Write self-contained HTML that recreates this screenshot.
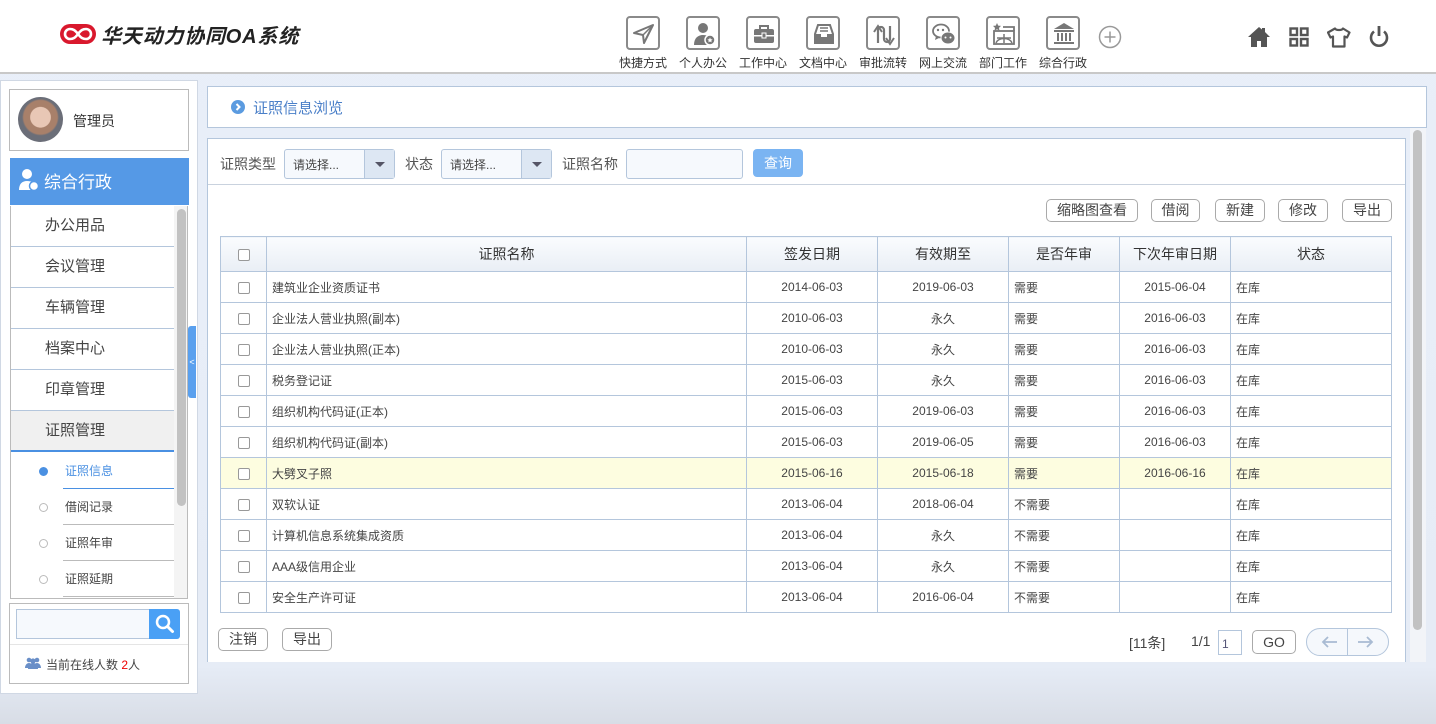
<!DOCTYPE html>
<html><head><meta charset="utf-8">
<style>
*{box-sizing:border-box;margin:0;padding:0}
body{width:1436px;height:724px;overflow:hidden;background:linear-gradient(#e9eff9,#e6ecf6 92%,#d8dde6);font-family:"Liberation Sans","Noto Sans CJK SC",sans-serif;color:#333;position:relative}
.a{position:absolute}
#hd{left:0;top:0;width:1436px;height:74px;background:#fff;border-bottom:2px solid #c8c8c8}
.ico{position:absolute;top:16px;width:34px;height:34px;border:2px solid #8a8a8a;border-radius:4px}
.ico svg{position:absolute;left:3px;top:3px}
.lbl{position:absolute;top:54px;font-size:12px;color:#333;width:60px;text-align:center}
.menu{left:10px;width:163px;height:41px;border-bottom:1px solid #b4c6dc;font-size:15px;color:#444;padding-left:34px;line-height:40px;background:#fff}
.sub{left:62px;width:111px;height:36px;border-bottom:1px solid #bbb;font-size:12px;color:#444;line-height:36px;padding-left:2px}
.dot{position:absolute;left:-24px;top:14px;width:9px;height:9px;border-radius:50%;border:1px solid #bbb;background:#fff}
.btn{position:absolute;height:23px;border:1px solid #aaa;border-radius:5px;background:#fff;font-size:14px;color:#444;text-align:center;line-height:21px}
table{border-collapse:collapse;font-size:12px;color:#444}
td,th{border:1px solid #b4c6dc;height:31px}
th{height:35px;font-weight:normal;font-size:14px;color:#333;background:linear-gradient(#fafcfe,#e9eef5)}
td.c{text-align:center}
td.l{padding-left:5px}
.cb{display:inline-block;width:12px;height:12px;border:1px solid #999;border-radius:2px;background:#fff;vertical-align:middle}
.sel{position:absolute;top:149px;height:30px;border:1px solid #b4c6dc;border-radius:3px;background:#f6f9fd;font-size:12px;color:#444;line-height:30px;padding-left:8px}
.sel i{position:absolute;right:0;top:0;width:30px;height:28px;background:#dde7f3;border-left:1px solid #b4c6dc}
.sel i:after{content:"";position:absolute;left:10px;top:12px;border:5px solid transparent;border-top:5px solid #556}
</style></head><body>
<div id="hd" class="a">
 <svg class="a" style="left:60px;top:24px" width="36" height="20" viewBox="0 0 36 20"><rect x="0" y="0" width="36" height="20" rx="10" fill="#d9182d"/><path d="M18 10c-3-4-5-5-8-5a5 5 0 0 0 0 10c3 0 5-1 8-5c3-4 5-5 8-5a5 5 0 0 1 0 10c-3 0-5-1-8-5z" fill="none" stroke="#fff" stroke-width="2.6"/></svg>
 <div class="a" style="left:101px;top:20px;font-size:20px;font-weight:bold;font-style:italic;color:#222;letter-spacing:0.8px">华天动力协同OA系统</div>

 <div class="ico" style="left:626px"><svg width="26" height="26" viewBox="0 0 26 26"><path d="M3 12L22 4L13 22L12 14Z" fill="none" stroke="#777" stroke-width="2" stroke-linejoin="round"/><path d="M12 14L22 4" stroke="#777" stroke-width="1.5"/></svg></div>
 <div class="ico" style="left:686px"><svg width="26" height="26" viewBox="0 0 26 26"><circle cx="12" cy="7" r="5" fill="#777"/><path d="M3 24c0-7 4-10 9-10s7 2 8 5v5z" fill="#777"/><circle cx="19" cy="19" r="5" fill="#777" stroke="#fff" stroke-width="1.5"/><path d="M19 16.5l.8 1.7 1.8.2-1.3 1.2.3 1.8-1.6-.9-1.6.9.3-1.8-1.3-1.2 1.8-.2z" fill="#fff"/></svg></div>
 <div class="ico" style="left:746px"><svg width="26" height="26" viewBox="0 0 26 26"><path d="M9 8V5h8v3" fill="none" stroke="#777" stroke-width="2"/><rect x="3" y="8" width="20" height="14" rx="2" fill="#777"/><rect x="3" y="14" width="20" height="1.5" fill="#fff"/><rect x="11" y="12" width="4" height="5" fill="#777" stroke="#fff"/></svg></div>
 <div class="ico" style="left:806px"><svg width="26" height="26" viewBox="0 0 26 26"><path d="M4 13L7 4h12l3 9v9H4z" fill="none" stroke="#777" stroke-width="2"/><path d="M4 13h6v3h6v-3h6v9H4z" fill="#777"/><path d="M9 7h8M9 10h8" stroke="#777" stroke-width="1.5"/></svg></div>
 <div class="ico" style="left:866px"><svg width="26" height="26" viewBox="0 0 26 26"><path d="M7 22V9a3 3 0 0 1 6 0v9a3 3 0 0 0 6 0V5" fill="none" stroke="#777" stroke-width="2.2"/><path d="M3 11l4-6 4 6M15 17l4 6 4-6" fill="none" stroke="#777" stroke-width="2"/></svg></div>
 <div class="ico" style="left:926px"><svg width="26" height="26" viewBox="0 0 26 26"><ellipse cx="10" cy="10" rx="8" ry="6.5" fill="none" stroke="#777" stroke-width="1.8"/><path d="M5 15l-1 4 4-2" fill="#777"/><ellipse cx="17" cy="17" rx="7" ry="6" fill="#777" stroke="#fff" stroke-width="1"/><circle cx="7" cy="9" r="1.2" fill="#777"/><circle cx="12" cy="9" r="1.2" fill="#777"/><circle cx="14.5" cy="16.5" r="1" fill="#fff"/><circle cx="19.5" cy="16.5" r="1" fill="#fff"/></svg></div>
 <div class="ico" style="left:986px"><svg width="26" height="26" viewBox="0 0 26 26"><path d="M6 2l1.2 2.6 2.8.3-2 2 .5 2.8-2.5-1.4-2.5 1.4.5-2.8-2-2 2.8-.3z" fill="#777"/><rect x="3" y="10" width="20" height="13" fill="none" stroke="#777" stroke-width="1.8"/><path d="M12 6h11v4" fill="none" stroke="#777" stroke-width="1.8"/><path d="M5 22c2-6 14-6 16 0M13 13v9M6 17h14" fill="none" stroke="#777" stroke-width="1.5"/></svg></div>
 <div class="ico" style="left:1046px"><svg width="26" height="26" viewBox="0 0 26 26"><path d="M3 8L13 2l10 6z" fill="#777"/><rect x="3" y="9" width="20" height="2" fill="#777"/><path d="M7 12v8M11 12v8M15 12v8M19 12v8" stroke="#777" stroke-width="2"/><rect x="3" y="21" width="20" height="2" fill="#777"/></svg></div>
 <svg class="a" style="left:1098px;top:25px" width="24" height="24" viewBox="0 0 24 24"><circle cx="12" cy="12" r="10.5" fill="none" stroke="#999" stroke-width="1.5"/><path d="M12 6.5v11M6.5 12h11" stroke="#999" stroke-width="1.5"/></svg>
 <div class="lbl" style="left:613px">快捷方式</div><div class="lbl" style="left:673px">个人办公</div><div class="lbl" style="left:733px">工作中心</div><div class="lbl" style="left:793px">文档中心</div><div class="lbl" style="left:853px">审批流转</div><div class="lbl" style="left:913px">网上交流</div><div class="lbl" style="left:973px">部门工作</div><div class="lbl" style="left:1033px">综合行政</div>

 <svg class="a" style="left:1247px;top:26px" width="24" height="22" viewBox="0 0 24 22"><path d="M12 1L1 11h3v10h6v-6h4v6h6V11h3L18 6V2h-3v1.5z" fill="#555"/></svg>
 <svg class="a" style="left:1289px;top:27px" width="20" height="20" viewBox="0 0 20 20"><g fill="none" stroke="#555" stroke-width="2.4"><rect x="1.5" y="1.5" width="6.5" height="6.5"/><rect x="12" y="1.5" width="6.5" height="6.5"/><rect x="1.5" y="12" width="6.5" height="6.5"/><rect x="12" y="12" width="6.5" height="6.5"/></g></svg>
 <svg class="a" style="left:1327px;top:27px" width="24" height="21" viewBox="0 0 24 21"><path d="M8 1.5c1 2 7 2 8 0l6.5 4-2.5 5-2.5-1V19.5H6V9.5l-2.5 1L1 5.5z" fill="none" stroke="#555" stroke-width="2.2" stroke-linejoin="round"/></svg>
 <svg class="a" style="left:1368px;top:25px" width="22" height="23" viewBox="0 0 22 23"><path d="M6 6.5a8 8 0 1 0 10 0" fill="none" stroke="#555" stroke-width="2.6"/><path d="M11 1v10" stroke="#555" stroke-width="2.8"/></svg>
</div>

<div class="a" style="left:0;top:80px;width:198px;height:614px;background:#fff;border:1px solid #d0d8e4"></div>
<div class="a" style="left:9px;top:89px;width:180px;height:62px;border:1px solid #bbb;background:#fff"></div>
<div class="a" style="left:18px;top:97px;width:45px;height:45px;border-radius:50%;background:radial-gradient(circle at 50% 45%,#e8c7b5 0 30%,#a8806a 32% 50%,#6b6e78 55%)"></div>
<div class="a" style="left:73px;top:111px;font-size:14px;color:#333">管理员</div>
<div class="a" style="left:10px;top:158px;width:179px;height:47px;background:#5599e6"></div>
<svg class="a" style="left:18px;top:168px" width="22" height="24" viewBox="0 0 22 24"><circle cx="9" cy="6" r="5" fill="#fff"/><path d="M1 22c0-6 3-9 8-9s7 2 8 5v4z" fill="#fff"/><circle cx="16" cy="18" r="4.5" fill="#fff" stroke="#5599e6" stroke-width="1.5"/></svg>
<div class="a" style="left:44px;top:168px;font-size:17px;color:#fff">综合行政</div>
<div class="a" style="left:10px;top:206px;width:178px;height:393px;border-left:1px solid #bbb;border-right:1px solid #bbb;border-bottom:1px solid #bbb;overflow:hidden">
 <div class="a menu" style="left:0;top:0">办公用品</div>
 <div class="a menu" style="left:0;top:41px">会议管理</div>
 <div class="a menu" style="left:0;top:82px">车辆管理</div>
 <div class="a menu" style="left:0;top:123px">档案中心</div>
 <div class="a menu" style="left:0;top:164px">印章管理</div>
 <div class="a menu" style="left:0;top:205px;background:#f0f0f0;border-bottom:2px solid #4a90e2">证照管理</div>
 <div class="a sub" style="left:52px;top:247px;color:#4a90e2;border-bottom:1px solid #4a90e2"><span class="dot" style="background:#4a90e2;border-color:#4a90e2"></span>证照信息</div>
 <div class="a sub" style="left:52px;top:283px"><span class="dot"></span>借阅记录</div>
 <div class="a sub" style="left:52px;top:319px"><span class="dot"></span>证照年审</div>
 <div class="a sub" style="left:52px;top:355px"><span class="dot"></span>证照延期</div>
 <div class="a" style="left:163px;top:0;width:14px;height:393px;background:#f4f4f4"></div>
 <div class="a" style="left:166px;top:3px;width:9px;height:297px;background:#c2c2c2;border-radius:5px"></div>
</div>
<div class="a" style="left:188px;top:326px;width:8px;height:72px;background:#5aa0ee;border-radius:3px 0 0 3px;color:#fff;font-size:9px;line-height:72px;text-align:center">&lt;</div>
<div class="a" style="left:9px;top:603px;width:180px;height:81px;border:1px solid #bbb;background:#fff"></div>
<div class="a" style="left:16px;top:609px;width:134px;height:30px;border:1px solid #b4c6dc;background:#f6f9fd"></div>
<div class="a" style="left:149px;top:609px;width:31px;height:30px;background:#4aa0f5;border-radius:0 3px 3px 0"></div>
<svg class="a" style="left:153px;top:612px" width="24" height="24" viewBox="0 0 24 24"><circle cx="10" cy="10" r="6" fill="none" stroke="#fff" stroke-width="2.5"/><path d="M14.5 14.5l5 5" stroke="#fff" stroke-width="3" stroke-linecap="round"/></svg>
<div class="a" style="left:10px;top:644px;width:178px;height:1px;background:#e5e5e5"></div>
<svg class="a" style="left:25px;top:657px" width="16" height="12" viewBox="0 0 16 12"><circle cx="4" cy="3" r="2.3" fill="#6a8fc8"/><circle cx="12" cy="3" r="2.3" fill="#6a8fc8"/><circle cx="8" cy="4" r="2.6" fill="#6a8fc8"/><path d="M0 11c0-3 2-5 4-5s4 2 4 5zM8 11c0-3 2-5 4-5s4 2 4 5z" fill="#6a8fc8"/><path d="M3 12c0-4 2-6 5-6s5 2 5 6z" fill="#6a8fc8"/></svg>
<div class="a" style="left:46px;top:656px;font-size:12px;color:#444">当前在线人数 <span style="color:#e00">2</span>人</div>

<div class="a" style="left:207px;top:86px;width:1220px;height:42px;background:#fff;border:1px solid #b4c6dc"></div>
<svg class="a" style="left:231px;top:100px" width="14" height="14" viewBox="0 0 14 14"><circle cx="7" cy="7" r="7" fill="#5b9be0"/><path d="M5.5 4l3 3-3 3" fill="none" stroke="#fff" stroke-width="2"/></svg>
<div class="a" style="left:253px;top:97px;font-size:15px;color:#4a7fc8">证照信息浏览</div>

<div class="a" style="left:207px;top:138px;width:1199px;height:524px;background:#fff;border:1px solid #b4c6dc;border-bottom:none"></div>
<div class="a" style="left:1410px;top:128px;width:16px;height:534px;background:#f2f4f8"></div>
<div class="a" style="left:1413px;top:130px;width:9px;height:500px;background:#c2c2c2;border-radius:5px"></div>
<div class="a" style="left:208px;top:184px;width:1197px;height:1px;background:#c9d2de"></div>
<div class="a" style="left:220px;top:154px;font-size:14px;color:#555">证照类型</div>
<div class="sel" style="left:284px;width:111px">请选择...<i></i></div>
<div class="a" style="left:405px;top:154px;font-size:14px;color:#555">状态</div>
<div class="sel" style="left:441px;width:111px">请选择...<i></i></div>
<div class="a" style="left:562px;top:154px;font-size:14px;color:#555">证照名称</div>
<div class="a" style="left:626px;top:149px;width:117px;height:30px;border:1px solid #b4c6dc;border-radius:3px;background:#f6f9fd"></div>
<div class="a" style="left:753px;top:149px;width:50px;height:28px;border-radius:4px;background:#7ab4f2;color:#fff;font-size:14px;line-height:28px;text-align:center">查询</div>

<div class="btn" style="left:1046px;top:199px;width:92px">缩略图查看</div>
<div class="btn" style="left:1151px;top:199px;width:49px">借阅</div>
<div class="btn" style="left:1215px;top:199px;width:50px">新建</div>
<div class="btn" style="left:1278px;top:199px;width:50px">修改</div>
<div class="btn" style="left:1342px;top:199px;width:50px">导出</div>

<table class="a" style="left:220px;top:236px;width:1172px">
<colgroup><col style="width:46px"><col style="width:480px"><col style="width:131px"><col style="width:131px"><col style="width:111px"><col style="width:111px"><col></colgroup>
<tr><th><span class="cb"></span></th><th>证照名称</th><th>签发日期</th><th>有效期至</th><th>是否年审</th><th>下次年审日期</th><th>状态</th></tr>
<tr><td class="c"><span class="cb"></span></td><td class="l">建筑业企业资质证书</td><td class="c">2014-06-03</td><td class="c">2019-06-03</td><td class="l">需要</td><td class="c">2015-06-04</td><td class="l">在库</td></tr>
<tr><td class="c"><span class="cb"></span></td><td class="l">企业法人营业执照(副本)</td><td class="c">2010-06-03</td><td class="c">永久</td><td class="l">需要</td><td class="c">2016-06-03</td><td class="l">在库</td></tr>
<tr><td class="c"><span class="cb"></span></td><td class="l">企业法人营业执照(正本)</td><td class="c">2010-06-03</td><td class="c">永久</td><td class="l">需要</td><td class="c">2016-06-03</td><td class="l">在库</td></tr>
<tr><td class="c"><span class="cb"></span></td><td class="l">税务登记证</td><td class="c">2015-06-03</td><td class="c">永久</td><td class="l">需要</td><td class="c">2016-06-03</td><td class="l">在库</td></tr>
<tr><td class="c"><span class="cb"></span></td><td class="l">组织机构代码证(正本)</td><td class="c">2015-06-03</td><td class="c">2019-06-03</td><td class="l">需要</td><td class="c">2016-06-03</td><td class="l">在库</td></tr>
<tr><td class="c"><span class="cb"></span></td><td class="l">组织机构代码证(副本)</td><td class="c">2015-06-03</td><td class="c">2019-06-05</td><td class="l">需要</td><td class="c">2016-06-03</td><td class="l">在库</td></tr>
<tr style="background:#fdfde0"><td class="c"><span class="cb"></span></td><td class="l">大劈叉子照</td><td class="c">2015-06-16</td><td class="c">2015-06-18</td><td class="l">需要</td><td class="c">2016-06-16</td><td class="l">在库</td></tr>
<tr><td class="c"><span class="cb"></span></td><td class="l">双软认证</td><td class="c">2013-06-04</td><td class="c">2018-06-04</td><td class="l">不需要</td><td class="c"></td><td class="l">在库</td></tr>
<tr><td class="c"><span class="cb"></span></td><td class="l">计算机信息系统集成资质</td><td class="c">2013-06-04</td><td class="c">永久</td><td class="l">不需要</td><td class="c"></td><td class="l">在库</td></tr>
<tr><td class="c"><span class="cb"></span></td><td class="l">AAA级信用企业</td><td class="c">2013-06-04</td><td class="c">永久</td><td class="l">不需要</td><td class="c"></td><td class="l">在库</td></tr>
<tr><td class="c"><span class="cb"></span></td><td class="l">安全生产许可证</td><td class="c">2013-06-04</td><td class="c">2016-06-04</td><td class="l">不需要</td><td class="c"></td><td class="l">在库</td></tr>
</table>

<div class="btn" style="left:218px;top:628px;width:50px">注销</div>
<div class="btn" style="left:282px;top:628px;width:50px">导出</div>
<div class="a" style="left:1129px;top:633px;font-size:14px;color:#444">[11条]</div>
<div class="a" style="left:1191px;top:633px;font-size:14px;color:#444">1/1</div>
<div class="a" style="left:1218px;top:630px;width:24px;height:25px;border:1px solid #b4c6dc;font-size:12px;color:#557;padding:6px 0 0 3px">1</div>
<div class="btn" style="left:1252px;top:630px;width:44px;height:24px;font-size:14px;line-height:22px">GO</div>
<div class="a" style="left:1306px;top:628px;width:83px;height:28px;border:1px solid #b4c6dc;border-radius:14px;background:#f5f8fc"></div>
<div class="a" style="left:1347px;top:629px;width:1px;height:26px;background:#b4c6dc"></div>
<svg class="a" style="left:1320px;top:634px" width="60" height="16" viewBox="0 0 60 16"><path d="M17 8H3M8 3L3 8l5 5" fill="none" stroke="#a9bbd3" stroke-width="1.8"/><path d="M38 8h14M47 3l5 5-5 5" fill="none" stroke="#a9bbd3" stroke-width="1.8"/></svg>
</body></html>
